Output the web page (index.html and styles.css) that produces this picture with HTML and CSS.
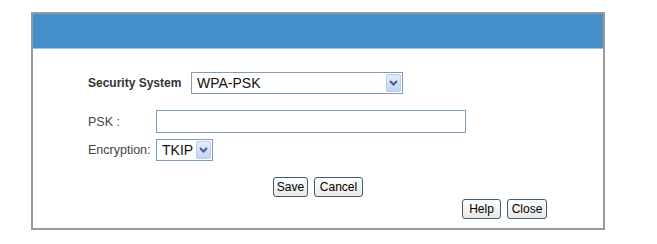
FILE: index.html
```html
<!DOCTYPE html>
<html lang="en">
<head>
    <meta charset="UTF-8">
    <title>Wireless Security</title>
    <link rel="stylesheet" href="styles.css">
</head>
<body>
    <div class="panel">
        <div class="panel-header"></div>
        <form class="panel-body" id="securityForm">
            <div class="row row-main">
                <label class="label-main" for="system">Security System</label>
                <div class="combo combo-wide">
                    <select id="system" name="system">
                        <option>WPA-PSK</option>
                        <option>WEP</option>
                        <option>None</option>
                    </select>
                    <span class="arrow"><svg width="9" height="6" viewBox="0 0 9 6"><path d="M1 1 L4.5 4.5 L8 1" fill="none" stroke="#4b5f82" stroke-width="2"/></svg></span>
                </div>
            </div>

            <div class="row row-psk">
                <label class="label" for="psk">PSK :</label>
                <input type="text" id="psk" name="psk">
            </div>

            <div class="row row-enc">
                <label class="label" for="enc">Encryption:</label>
                <div class="combo combo-small">
                    <select id="enc" name="enc">
                        <option>TKIP</option>
                        <option>AES</option>
                    </select>
                    <span class="arrow"><svg width="9" height="6" viewBox="0 0 9 6"><path d="M1 1 L4.5 4.5 L8 1" fill="none" stroke="#4b5f82" stroke-width="2"/></svg></span>
                </div>
            </div>

            <div class="actions">
                <button type="submit" class="btn btn-save">Save</button>
                <button type="button" class="btn btn-cancel">Cancel</button>
            </div>

            <div class="actions-right">
                <button type="button" class="btn btn-help">Help</button>
                <button type="button" class="btn btn-close">Close</button>
            </div>
        </form>
    </div>
</body>
</html>
```

FILE: styles.css
```css
body {
    margin: 0;
    padding: 0;
    background-color: #ffffff;
    font-family: "Liberation Sans", Arial, sans-serif;
    color: #333;
}
.panel {
    margin: 12px 0 0 31px;
    width: 570px;
    height: 214px;
    border: 2px solid #9a9a9a;
    display: flex;
    flex-direction: column;
}
.panel-header {
    height: 34px;
    background-color: #4590cb;
    border-bottom: 1px solid #9cc6e8;
}
.panel-body {
    padding: 23px 0 0 55px;
    margin: 0;
    display: flex;
    flex-direction: column;
}
.row {
    display: flex;
    align-items: center;
}
.label-main {
    width: 103px;
    font-weight: bold;
    font-size: 12px;
    color: #333;
}
.label {
    width: 68px;
    font-size: 12.5px;
    color: #444;
}
.row-psk {
    margin-top: 16px;
}
.row-enc {
    margin-top: 6px;
}
.combo {
    position: relative;
    height: 22px;
    box-sizing: border-box;
    border: 1px solid #7f9db9;
    background: #fff;
}
.combo-wide {
    width: 212px;
}
.combo-small {
    width: 57px;
}
.combo select {
    appearance: none;
    -webkit-appearance: none;
    border: none;
    outline: none;
    background: transparent;
    width: 100%;
    height: 100%;
    padding: 0 0 0 5px;
    font-family: "Liberation Sans", Arial, sans-serif;
    font-size: 14px;
    color: #111;
}
.arrow {
    position: absolute;
    top: 1px;
    right: 1px;
    width: 15px;
    height: 18px;
    box-sizing: border-box;
    border: 1px solid #b9cdee;
    border-radius: 2px;
    background: linear-gradient(#e3ecfd, #c2d5f6);
    display: flex;
    align-items: center;
    justify-content: center;
}
input[type="text"] {
    width: 310px;
    height: 23px;
    box-sizing: border-box;
    border: 1px solid #7f9db9;
    padding: 0 4px;
    font-size: 13px;
}
.actions {
    margin-top: 16px;
    margin-left: -55px;
    display: flex;
    justify-content: center;
    gap: 6px;
}
.actions-right {
    margin-top: 2px;
    margin-left: -55px;
    padding-right: 56px;
    display: flex;
    justify-content: flex-end;
    gap: 6px;
}
.btn {
    height: 20px;
    box-sizing: border-box;
    padding: 0;
    border: 1px solid #3e5b7e;
    border-radius: 3px;
    background: linear-gradient(#ffffff, #e8e8e4);
    font-family: "Liberation Sans", Arial, sans-serif;
    font-size: 12px;
    color: #000;
    cursor: pointer;
}
.btn-save {
    width: 35px;
}
.btn-cancel {
    width: 49px;
}
.btn-help {
    width: 39px;
}
.btn-close {
    width: 40px;
}
```
